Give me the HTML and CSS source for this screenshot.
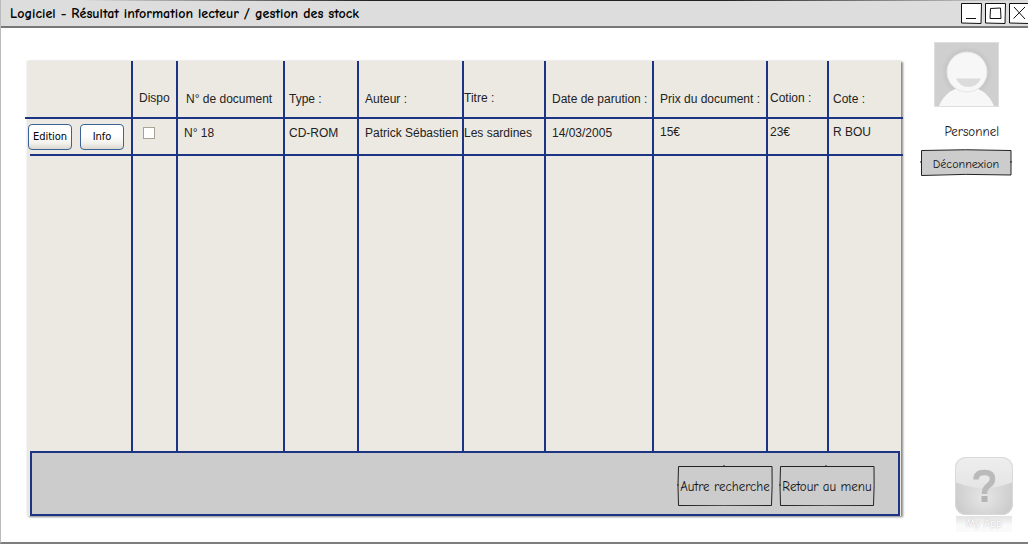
FILE: index.html
```html
<!DOCTYPE html>
<html lang="fr">
<head>
<meta charset="utf-8">
<title>Logiciel - Résultat information lecteur / gestion des stock</title>
<link rel="stylesheet" href="styles.css">
</head>
<body>
<div class="window">
  <header class="titlebar">
    <h1 class="title">Logiciel - Résultat information lecteur / gestion des stock</h1>
    <div class="window-controls">
      <button type="button" class="control" aria-label="Réduire"><svg viewBox="0 0 21 22"><path class="box" d="M.5 1.500H20.500L20 21.500L.5 21Z"/><path d="M5 16.500H15"/></svg></button>
      <button type="button" class="control" aria-label="Agrandir"><svg viewBox="0 0 21 22"><path class="box" d="M.5 1.500H20.500L20 21.500L.5 21Z"/><path d="M5.500 6.500L15.500 6L16 16.500H5Z"/></svg></button>
      <button type="button" class="control" aria-label="Fermer"><svg viewBox="0 0 21 22"><path class="box" d="M.5 1.500H20.500L20 21.500L.5 21Z"/><path d="M5 5L16 17M16 5L4.500 16.500"/></svg></button>
    </div>
  </header>
  <div class="content">
    <main class="panel">
      <table class="results">
        <colgroup>
          <col class="c-actions"><col class="c-dispo"><col class="c-number"><col class="c-type"><col class="c-author"><col class="c-title"><col class="c-date"><col class="c-price"><col class="c-rating"><col class="c-shelf">
        </colgroup>
        <thead>
          <tr class="ruled head-row">
            <td></td><th scope="col" class="up pad-m">Dispo</th><th scope="col" class="pad-l">N° de document</th><th scope="col">Type :</th><th scope="col" class="pad-m">Auteur :</th><th scope="col" class="up pad-none">Titre :</th><th scope="col" class="pad-m">Date de parution :</th><th scope="col" class="pad-m">Prix du document :</th><th scope="col" class="up pad-s">Cotion :</th><th scope="col">Cote :</th>
          </tr>
        </thead>
        <tbody>
          <tr class="ruled data-row">
            <td class="pad-none"><div class="actions"><button type="button" class="small-button">Edition</button><button type="button" class="small-button">Info</button></div></td>
            <td class="check-cell"><input type="checkbox" class="check" aria-label="Dispo"></td>
            <td class="pad-m">N° 18</td><td>CD-ROM</td><td class="pad-m">Patrick Sébastien</td><td class="pad-none">Les sardines</td><td class="pad-m">14/03/2005</td><td class="up pad-m">15€</td><td class="up pad-s">23€</td><td class="up">R BOU</td>
          </tr>
          <tr class="empty-row"><td></td><td></td><td></td><td></td><td></td><td></td><td></td><td></td><td></td><td></td></tr>
        </tbody>
      </table>
      <div class="footer">
        <button type="button" class="sketch-button large"><svg class="frame" viewBox="0 0 96 41" preserveAspectRatio="none"><path d="M1.500 1.500H95Q95.500 20 94.500 40.500Q45 41 1.500 40.500Q.5 20 1.500 1.500M47 0V2M0 20H2"/></svg>Autre recherche</button>
        <button type="button" class="sketch-button large"><svg class="frame" viewBox="0 0 96 41" preserveAspectRatio="none"><path d="M1.500 1.500H95Q95.500 20 94.500 40.500Q45 41 1.500 40.500Q.5 20 1.500 1.500M47 0V2M0 20H2"/></svg>Retour au menu</button>
      </div>
    </main>
    <aside class="sidebar">
      <svg class="avatar" viewBox="0 0 65 65" aria-hidden="true">
        <defs>
          <radialGradient id="glow"><stop offset=".65" stop-color="#c0c0c0"/><stop offset="1" stop-color="#cfcfcf"/></radialGradient>
        </defs>
        <rect width="65" height="65" fill="#cfcfcf"/>
        <circle cx="33" cy="30" r="26" fill="url(#glow)"/>
        <path d="M5 64Q13 45 33 45Q52 45 60 64Z" fill="#f7f7f7"/>
        <circle cx="33" cy="30" r="20" fill="#f7f7f7" stroke="#e6e6e6"/>
        <path d="M22 36.500H47Q43 45 34.500 45Q26 45 22 36.500Z" fill="#dcdcdc"/>
        <rect x=".5" y=".5" width="64" height="64" fill="none" stroke="#dedede"/>
      </svg>
      <p class="user">Personnel</p>
      <button type="button" class="sketch-button logout"><svg class="frame" viewBox="0 0 92 27" preserveAspectRatio="none"><path d="M1.500 1.500Q45 0 91 1.500V26Q45 24.500 1.500 26.500ZM0 13H2M90 13H92"/></svg>Déconnexion</button>
      <div class="app">
        <svg class="app-icon" viewBox="0 0 60 60" aria-hidden="true">
          <defs>
            <linearGradient id="tile" x2="0" y2="1"><stop offset="0" stop-color="#d8d8d8"/><stop offset="1" stop-color="#c8c8c8"/></linearGradient>
            <linearGradient id="gloss" x2="0" y2="1"><stop offset="0" stop-color="#eeeeee"/><stop offset="1" stop-color="#e5e5e5"/></linearGradient>
            <radialGradient id="shine" cx=".5" cy=".7"><stop offset="0" stop-color="#e6e6e6"/><stop offset="1" stop-color="#e6e6e6" stop-opacity="0"/></radialGradient>
          </defs>
          <rect x="1" y="1" width="58" height="58" rx="11" fill="url(#tile)"/>
          <rect x="1" y="1" width="58" height="58" rx="11" fill="url(#shine)"/>
          <path d="M1 26V12Q1 1 12 1H48Q59 1 59 12V26Q30 38 1 26Z" fill="url(#gloss)"/>
          <rect x="1.500" y="1.500" width="57" height="57" rx="11" fill="none" stroke="#d9d9d9"/>
          <path d="M22 23.500Q22 16.500 30.500 16.500Q38.500 16.500 38.500 23Q38.500 27 34 30Q30.500 32.500 30.500 38" fill="none" stroke="#bababa" stroke-width="5.500"/>
          <rect x="27.500" y="40" width="6" height="6" fill="#b4b4b4"/>
        </svg>
        <span class="app-name">My App</span>
      </div>
    </aside>
  </div>
</div>
</body>
</html>
```
FILE: styles.css
```css
* { box-sizing: border-box; }
body {
  margin: 0;
  background: #fff;
  color: #111;
  font-family: "Comic Sans MS", "Comic Neue", "Noto Sans", sans-serif;
  font-size: 13px;
}
button { font: inherit; color: inherit; padding: 0; border: 0; background: none; white-space: nowrap; }
svg { display: block; }

.window {
  display: flex;
  flex-direction: column;
  min-height: calc(100vh - 1px);
  margin-bottom: 1px;
  border-left: 1px solid #bbb;
  border-bottom: 2px solid #7d7d7d;
}
.titlebar {
  display: flex;
  align-items: center;
  justify-content: space-between;
  height: 28px;
  padding-left: 9px;
  overflow: hidden;
  background: linear-gradient(90deg, #ddd 8%, #222 36%, #222 70%, #ddd) top / 100% 1px no-repeat #ddd;
  border-bottom: 2px solid #777;
}
.title { margin: 0; font-size: 14px; font-weight: 700; color: #000; white-space: nowrap; }
.window-controls { display: flex; gap: 3px; margin-right: -2px; }
.control { width: 21px; height: 22px; }
.control svg { width: 21px; height: 22px; fill: none; stroke: #111; stroke-width: 1; }
.control .box { fill: #fff; }

.content { flex: 1; display: flex; padding: 33px 0 26px 26px; }
.panel {
  flex: 1;
  min-width: 0;
  display: flex;
  flex-direction: column;
  background: #ece9e2;
  box-shadow: 2px 1px 2px #888, 0 0 2px #ddd;
}

.results {
  flex: 1;
  width: 100%;
  table-layout: fixed;
  border-collapse: separate;
  border-spacing: 0;
  font-family: "Liberation Sans", Arial, sans-serif;
  font-size: 12px;
  line-height: 14px;
  color: #222;
}
.c-actions { width: 106px; }
.c-dispo { width: 45px; }
.c-number { width: 107px; }
.c-type { width: 74px; }
.c-author { width: 105px; }
.c-title { width: 82px; }
.c-date { width: 108px; }
.c-price { width: 114px; }
.c-rating { width: 61px; }
.c-shelf { width: 72px; }
.results th,
.results td {
  padding: 0 0 0 4px;
  border-right: 2px solid #1c3484;
  font-weight: 400;
  text-align: left;
  white-space: nowrap;
}
.results tr > :last-child { border-right: 0; }
.results .pad-none { padding-left: 0; }
.results .pad-s { padding-left: 2px; }
.results .pad-m { padding-left: 6px; }
.results .pad-l { padding-left: 8px; }
.ruled { position: relative; }
.ruled::after {
  content: "";
  position: absolute;
  left: -2px;
  right: -2px;
  bottom: 0;
  height: 2px;
  background: #1c3484;
}
.data-row::after { left: 3px; }
.head-row { height: 58px; }
.head-row th { vertical-align: bottom; padding-bottom: 13px; }
.head-row .up { padding-bottom: 14px; }
.data-row { height: 37px; }
.data-row td { vertical-align: top; padding-top: 7px; }
.data-row .up { padding-top: 6px; }
.data-row .check-cell { padding: 8px 0 0 10px; }
.data-row .pad-none:first-child { padding-top: 5px; }
.actions { display: flex; gap: 8px; padding-left: 1px; }
.small-button {
  width: 44px;
  height: 26px;
  border: 1px solid #3a6397;
  border-radius: 4px;
  background: linear-gradient(#fff 45%, #f3f2ee 75%, #dcd8ce);
  font-family: "DejaVu Sans Condensed", "Noto Sans", sans-serif;
  font-size: 11px;
  color: #000;
}
.check {
  display: block;
  appearance: none;
  width: 12px;
  height: 12px;
  margin: 0;
  border: 1px solid #aaa294;
  background: #fff;
}

.footer {
  display: flex;
  justify-content: flex-end;
  align-items: center;
  gap: 6px;
  height: 65px;
  margin: 0 1px 0 3px;
  padding: 4px 23px 0 0;
  border: 2px solid #1c3484;
  background: #ccc;
}
.sketch-button {
  position: relative;
  display: grid;
  place-content: center;
  padding-top: 2px;
  isolation: isolate;
}
.frame {
  position: absolute;
  inset: 0;
  z-index: -1;
  width: 100%;
  height: 100%;
  fill: #ccc;
  stroke: #222;
  stroke-width: 1;
}
.large { width: 96px; height: 41px; }

.sidebar {
  flex: 0 0 127px;
  display: flex;
  flex-direction: column;
  align-items: flex-end;
  padding-right: 16px;
  margin-top: -19px;
  margin-bottom: -16px;
}
.avatar { width: 65px; height: 65px; margin-right: 13px; }
.user { margin: 17px 13px 0 0; line-height: 16px; }
.logout { width: 92px; height: 27px; margin-top: 9px; font-size: 12px; }
.app { display: grid; justify-items: center; margin: auto -2px 0 0; }
.app-icon { width: 60px; height: 60px; }
.app-name {
  width: 56px;
  line-height: 16px;
  text-align: center;
  font-size: 11px;
  color: #fff;
  text-shadow: 0 0 2px #aaa;
  background: linear-gradient(#e2e2e2, #fafafa 60%);
}
```
